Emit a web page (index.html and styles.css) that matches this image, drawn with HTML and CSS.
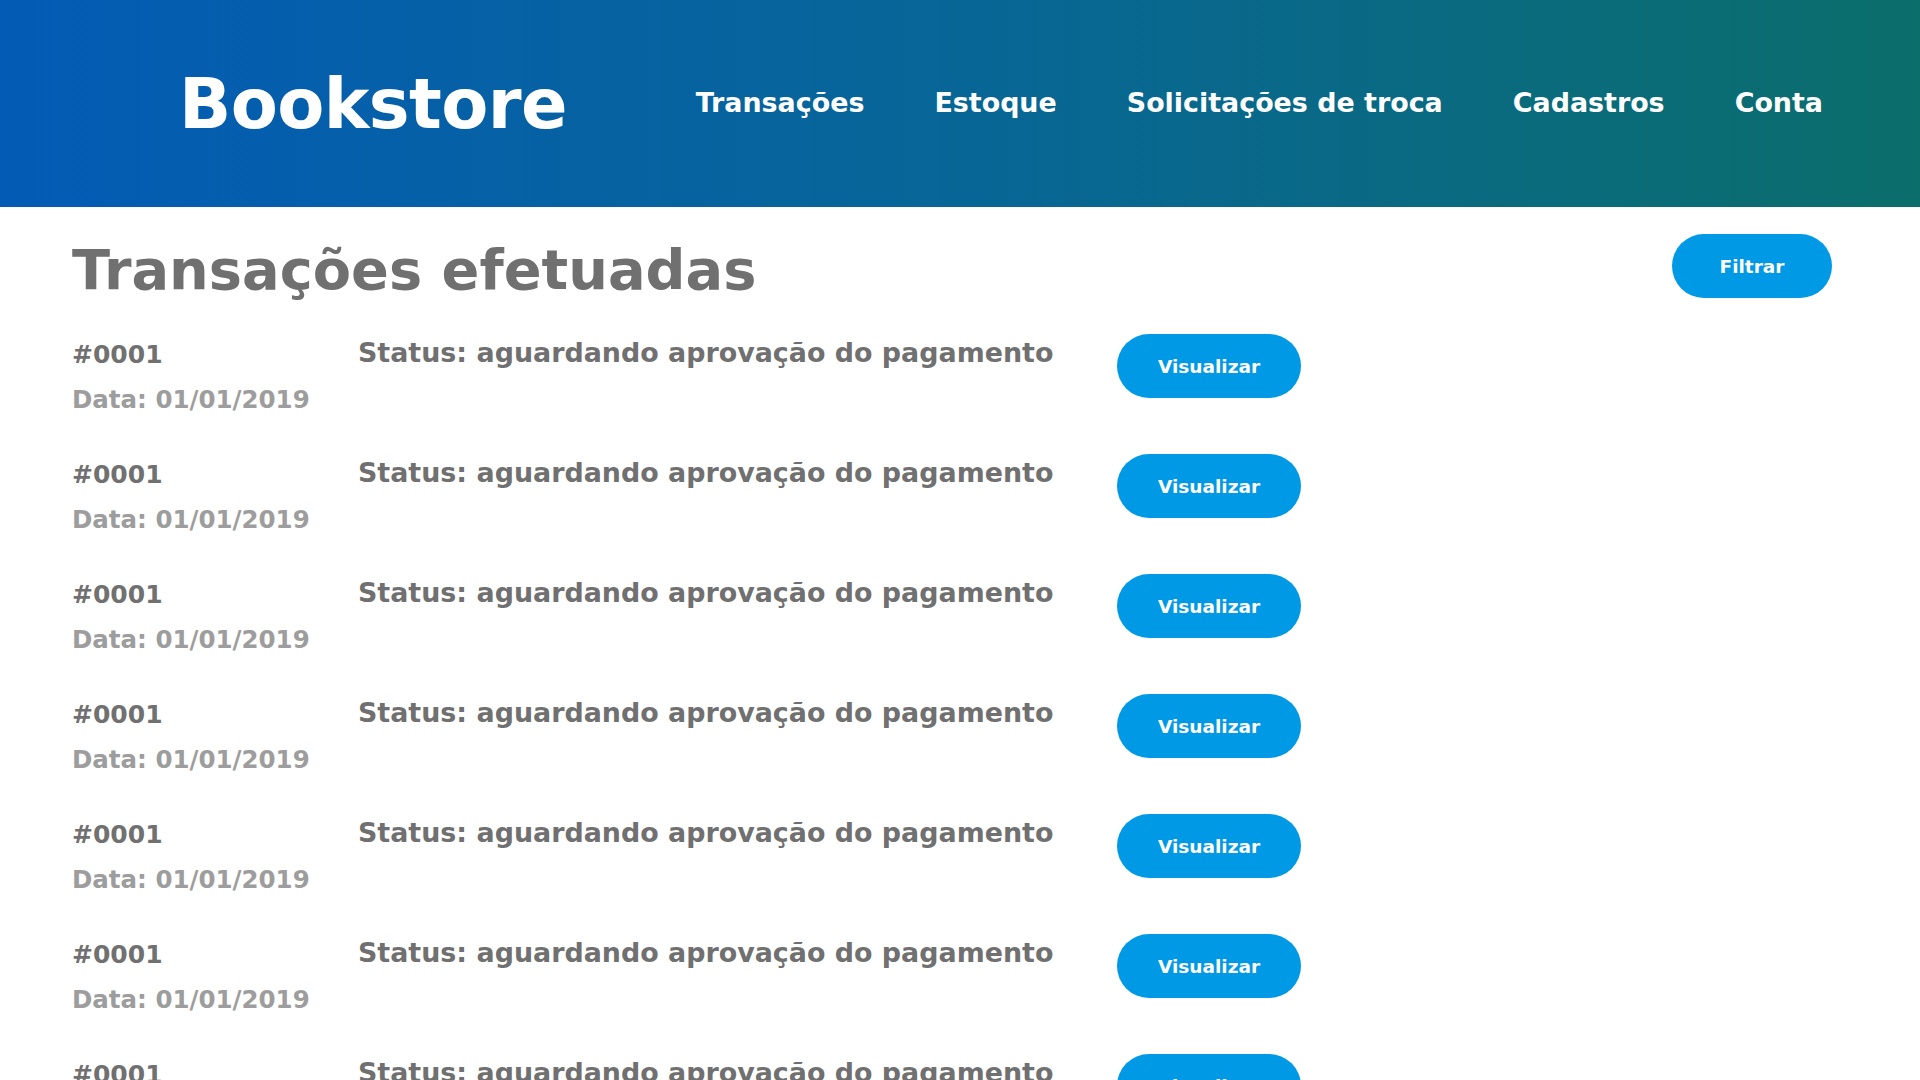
FILE: index.html
```html
<!DOCTYPE html>
<html lang="pt-BR">
<head>
<meta charset="utf-8">
<title>Bookstore - Transações</title>
<link rel="stylesheet" href="styles.css">
</head>
<body>
<div class="page">
  <header class="topbar">
    <div class="logo">Bookstore</div>
    <nav class="nav">
      <a href="#">Transações</a>
      <a href="#">Estoque</a>
      <a href="#">Solicitações de troca</a>
      <a href="#">Cadastros</a>
      <a href="#">Conta</a>
    </nav>
  </header>
  <main class="content">
    <div class="title-row">
      <h1 class="title">Transações efetuadas</h1>
      <button class="btn btn-filter">Filtrar</button>
    </div>
    <ul class="list">
      <li class="row">
        <div class="meta"><div class="id">#0001</div><div class="date">Data: 01/01/2019</div></div>
        <div class="status">Status: aguardando aprovação do pagamento</div>
        <button class="btn btn-view">Visualizar</button>
      </li>
      <li class="row">
        <div class="meta"><div class="id">#0001</div><div class="date">Data: 01/01/2019</div></div>
        <div class="status">Status: aguardando aprovação do pagamento</div>
        <button class="btn btn-view">Visualizar</button>
      </li>
      <li class="row">
        <div class="meta"><div class="id">#0001</div><div class="date">Data: 01/01/2019</div></div>
        <div class="status">Status: aguardando aprovação do pagamento</div>
        <button class="btn btn-view">Visualizar</button>
      </li>
      <li class="row">
        <div class="meta"><div class="id">#0001</div><div class="date">Data: 01/01/2019</div></div>
        <div class="status">Status: aguardando aprovação do pagamento</div>
        <button class="btn btn-view">Visualizar</button>
      </li>
      <li class="row">
        <div class="meta"><div class="id">#0001</div><div class="date">Data: 01/01/2019</div></div>
        <div class="status">Status: aguardando aprovação do pagamento</div>
        <button class="btn btn-view">Visualizar</button>
      </li>
      <li class="row">
        <div class="meta"><div class="id">#0001</div><div class="date">Data: 01/01/2019</div></div>
        <div class="status">Status: aguardando aprovação do pagamento</div>
        <button class="btn btn-view">Visualizar</button>
      </li>
      <li class="row">
        <div class="meta"><div class="id">#0001</div><div class="date">Data: 01/01/2019</div></div>
        <div class="status">Status: aguardando aprovação do pagamento</div>
        <button class="btn btn-view">Visualizar</button>
      </li>
    </ul>
  </main>
</div>
</body>
</html>
```

FILE: styles.css
```css
* { box-sizing: border-box; }

html, body {
  margin: 0;
  padding: 0;
  background: #ffffff;
}

body {
  font-family: "DejaVu Sans", "Liberation Sans", sans-serif;
  font-weight: 700;
}

.page {
  width: 100%;
  height: 100vh;
  overflow: hidden;
}

.topbar {
  height: 207px;
  display: flex;
  align-items: center;
  justify-content: space-between;
  padding: 0 97px 0 179px;
  background: linear-gradient(90deg, #045bb5 0%, #086697 50%, #0b6e6b 100%);
}

.logo {
  color: #ffffff;
  font-size: 68.6px;
  letter-spacing: -0.6px;
}

.nav {
  display: flex;
  gap: 70px;
  padding-bottom: 2px;
}

.nav a {
  color: #ffffff;
  text-decoration: none;
  font-size: 26.9px;
}

.content {
  padding: 27px 88px 0 72px;
}

.title-row {
  display: flex;
  justify-content: space-between;
  align-items: flex-start;
  margin-bottom: 29px;
}

.title {
  margin: 0;
  padding-top: 4px;
  margin-bottom: 3px;
  font-size: 55.8px;
  line-height: 64px;
  color: #707070;
  font-weight: 700;
}

.btn {
  border: none;
  background: #0099e6;
  color: #ffffff;
  font-family: inherit;
  font-weight: 700;
  font-size: 18.5px;
  height: 64px;
  border-radius: 32px;
  cursor: pointer;
  padding: 0;
}

.btn-filter {
  width: 160px;
}

.btn-view {
  width: 184px;
}

.list {
  list-style: none;
  margin: 0;
  padding: 0;
  display: flex;
  flex-direction: column;
  gap: 39px;
}

.row {
  display: grid;
  grid-template-columns: 286px 759px 184px;
  align-items: start;
}

.meta {
  padding-top: 6px;
}

.id {
  font-size: 25px;
  line-height: 30px;
  color: #707070;
}

.date {
  margin-top: 15px;
  font-size: 24.5px;
  line-height: 30px;
  color: #9d9d9d;
}

.status {
  padding-top: 3px;
  font-size: 26.9px;
  line-height: 32px;
  color: #707070;
}
```
